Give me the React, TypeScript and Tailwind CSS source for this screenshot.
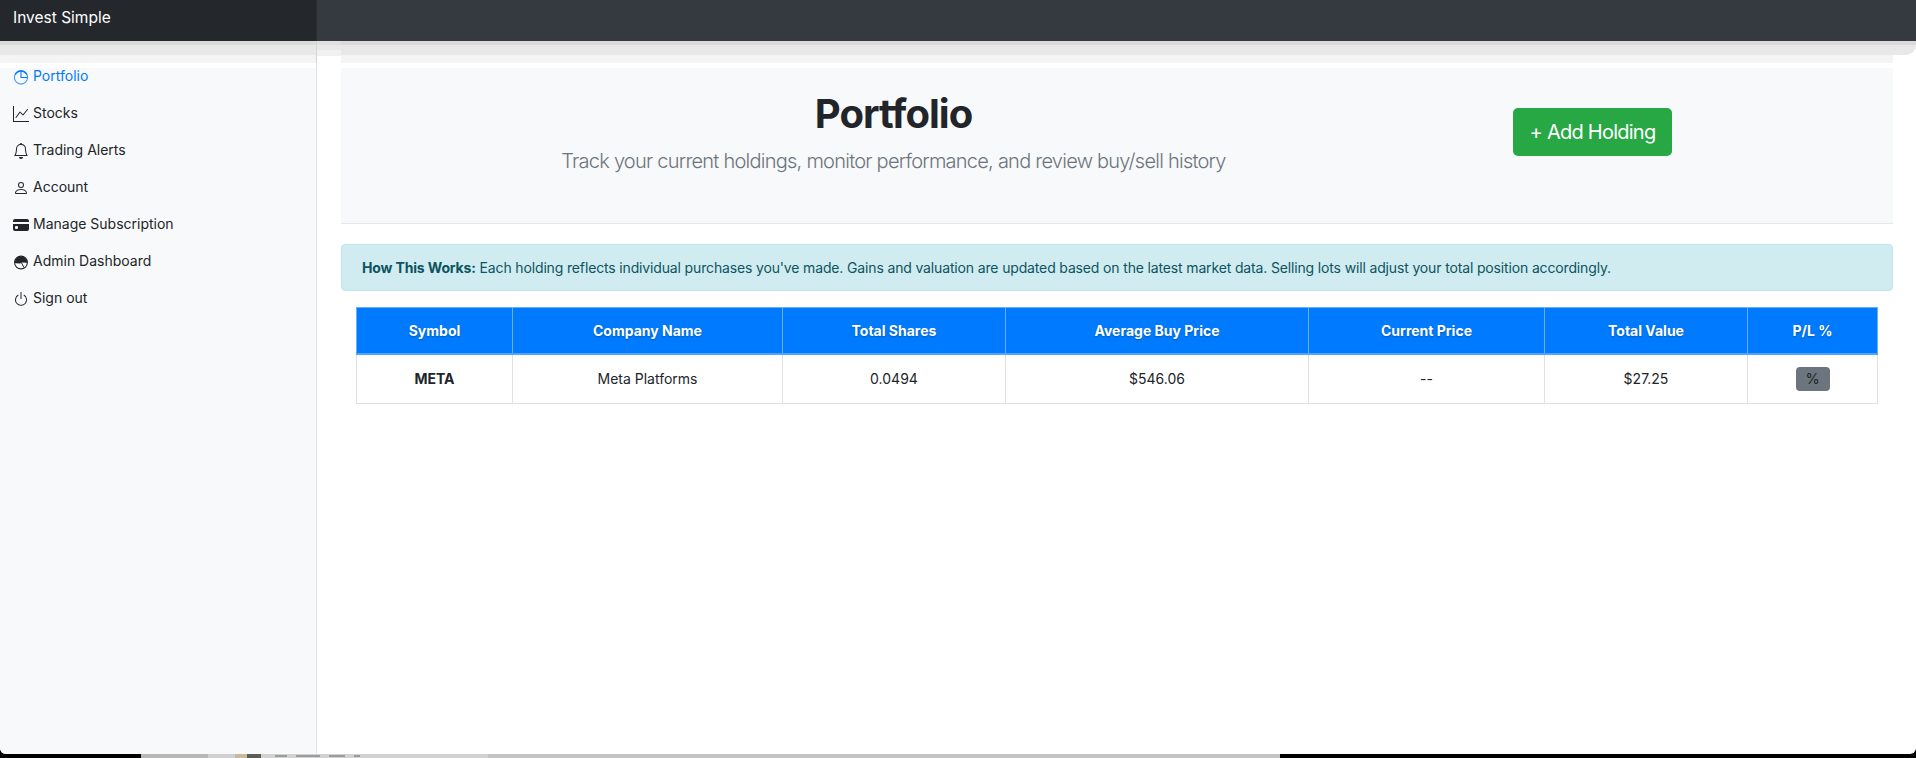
import { BsBell, BsCreditCardFill, BsGraphUp, BsPerson, BsPower } from "react-icons/bs";

function PortfolioIcon({ className }: { className?: string }) {
  return (
    <svg viewBox="0 0 16 16" fill="none" stroke="currentColor" strokeWidth="1.1" className={className}>
      <circle cx="8" cy="8.5" r="6.6" strokeOpacity="0.75" />
      <path d="M8 2v6.5h6.4" />
      <path d="M2.2 5.5A6.6 6.6 0 0 1 13.8 5.5" strokeWidth="1.5" />
    </svg>
  );
}

function AdminIcon({ className }: { className?: string }) {
  return (
    <svg viewBox="0 0 16 16" fill="currentColor" className={className}>
      <circle cx="8" cy="8.5" r="6.4" fill="none" stroke="currentColor" strokeWidth="1.1" />
      <path d="M1.6 8.8A6.4 6.4 0 1 1 14.4 8.8L9 8.4 7 9.6 3 9.2z" />
      <path d="M8.4 8.6l2.6 5" fill="none" stroke="currentColor" strokeWidth="1" />
    </svg>
  );
}

const navItems = [
  { label: "Portfolio", icon: PortfolioIcon, active: true },
  { label: "Stocks", icon: BsGraphUp },
  { label: "Trading Alerts", icon: BsBell },
  { label: "Account", icon: BsPerson },
  { label: "Manage Subscription", icon: BsCreditCardFill },
  { label: "Admin Dashboard", icon: AdminIcon },
  { label: "Sign out", icon: BsPower },
];

const columns = [
  { label: "Symbol", width: "w-[156px]" },
  { label: "Company Name", width: "w-[270px]" },
  { label: "Total Shares", width: "w-[223px]" },
  { label: "Average Buy Price", width: "w-[303px]" },
  { label: "Current Price", width: "w-[236px]" },
  { label: "Total Value", width: "w-[203px]" },
  { label: "P/L %", width: "w-[130px]" },
];

export default function App() {
  return (
    <div className="relative flex h-[758px] w-[1916px] flex-col overflow-hidden bg-black font-['Inter',sans-serif] text-[14px] text-[#212529]">
      <div className="relative z-10 flex h-[754px] flex-col overflow-hidden rounded-b-[6px] bg-white">
        {/* Navbar */}
        <header className="flex h-[41px] shrink-0 bg-[#343a40]">
          <div className="flex w-[317px] items-center border-r border-[#2b2f33] bg-[#24282c] pb-[5px] pl-[13px] text-[15.5px] text-white">
            Invest Simple
          </div>
        </header>

        {/* Navbar shadow */}
        <div className="absolute left-0 right-0 top-[41px] flex h-[27px]">
          <div className="w-[316px]">
            <div className="h-[4px] bg-[#dadada]" />
            <div className="h-[10px] bg-[#e8e8e8]" />
            <div className="h-[8px] bg-[#f4f4f4]" />
            <div className="h-[5px] bg-white" />
          </div>
          <div className="h-[22px] w-px bg-[#d6d6d6]" />
          <div className="w-[24px]">
            <div className="h-[4px] bg-[#e0e0e0]" />
            <div className="h-[5px] bg-[#e9e9e9]" />
            <div className="h-[6px] bg-[#f1f1f1]" />
          </div>
          <div className="flex-1">
            <div className="h-[4px] bg-[#dadada]" />
            <div className="h-[10px] rounded-br-[14px] bg-[#e8e8e8]" />
            <div className="h-[8px] w-[1552px] bg-[#f4f4f4]" />
          </div>
        </div>

        <div className="flex flex-1">
          {/* Sidebar */}
          <aside className="w-[317px] shrink-0 border-r border-[#e3e4e5] bg-[#f8f9fa] pt-[16px]">
            <ul>
              {navItems.map(({ label, icon: Icon, active }) => (
                <li
                  key={label}
                  className={`flex h-[37px] items-center gap-[4px] pl-[13px] ${active ? "text-[#007bff]" : "text-[#212529]"}`}
                >
                  <Icon className="size-4 shrink-0 translate-y-[1px]" />
                  {label}
                </li>
              ))}
            </ul>
          </aside>

          {/* Main */}
          <main className="min-w-0 flex-1 pl-[24px] pr-[23px] pt-[27px]">
            <section className="flex h-[156px] border-b border-[#e5e7e9] bg-[#f8f9fa]">
              <div className="w-[1105px] pt-[22px] text-center">
                <h1 className="text-[40px] font-bold leading-[48px] tracking-[-1px] text-[#212529]">Portfolio</h1>
                <p className="mt-[8px] text-[20px] font-light leading-[30px] tracking-[-0.75px] text-[#6c757d]">
                  Track your current holdings, monitor performance, and review buy/sell history
                </p>
              </div>
              <div className="pl-[67px] pt-[40px]">
                <button className="h-[48px] w-[159px] rounded-[5px] bg-[#28a745] text-[20px] tracking-[-0.75px] text-white">
                  + Add Holding
                </button>
              </div>
            </section>

            <div className="mt-[20px] flex h-[47px] items-center rounded-[4px] border border-[#bee5eb] bg-[#d1ecf1] pl-[20px] tracking-[-0.15px] text-[#0c5460]">
              <p>
                <strong className="font-bold">How This Works:</strong> Each holding reflects individual purchases you've
                made. Gains and valuation are updated based on the latest market data. Selling lots will adjust your
                total position accordingly.
              </p>
            </div>

            <div className="mt-[16px] px-[15px]">
              <table className="w-[1521px] table-fixed border-collapse text-center">
                <colgroup>
                  {columns.map((col) => (
                    <col key={col.label} className={col.width} />
                  ))}
                </colgroup>
                <thead>
                  <tr className="h-[46px] bg-[#007bff] text-white">
                    {columns.map((col) => (
                      <th
                        key={col.label}
                        className="border border-b-2 border-[#6aaef5] border-b-[#4ea5ff] font-bold [text-shadow:0_1px_2px_rgba(0,0,0,0.3)]"
                      >
                        {col.label}
                      </th>
                    ))}
                  </tr>
                </thead>
                <tbody>
                  <tr className="h-[50px]">
                    <td className="border border-[#dee2e6] font-bold">META</td>
                    <td className="border border-[#dee2e6]">Meta Platforms</td>
                    <td className="border border-[#dee2e6]">0.0494</td>
                    <td className="border border-[#dee2e6]">$546.06</td>
                    <td className="border border-[#dee2e6]">--</td>
                    <td className="border border-[#dee2e6]">$27.25</td>
                    <td className="border border-[#dee2e6]">
                      <span className="inline-flex h-[24px] w-[34px] items-center justify-center rounded-[4px] bg-[#6c757d] text-[14.5px] text-[#212529]">
                        %
                      </span>
                    </td>
                  </tr>
                </tbody>
              </table>
            </div>
          </main>
        </div>
      </div>

      {/* Desktop showing below the window */}
      <div className="absolute bottom-0 left-[141px] flex h-[6px] w-[1139px] items-end bg-[#c4c4c4]">
        <div className="h-full w-[67px] bg-[#b8b8b8]" />
        <div className="h-full w-[27px] bg-[#d0d0d0]" />
        <div className="h-full w-[12px] bg-[#c9b99a]" />
        <div className="h-full w-[14px] bg-[#5c5c58]" />
        <div className="flex h-full w-[227px] items-end gap-[9px] bg-[#d2d2d2] pb-[1px] pl-[14px]">
          <div className="h-[2px] w-[12px] bg-[#9a9c9e]" />
          <div className="h-[2px] w-[24px] bg-[#9a9c9e]" />
          <div className="h-[2px] w-[16px] bg-[#9a9c9e]" />
          <div className="h-[2px] w-[6px] bg-[#9a9c9e]" />
        </div>
      </div>
    </div>
  );
}
